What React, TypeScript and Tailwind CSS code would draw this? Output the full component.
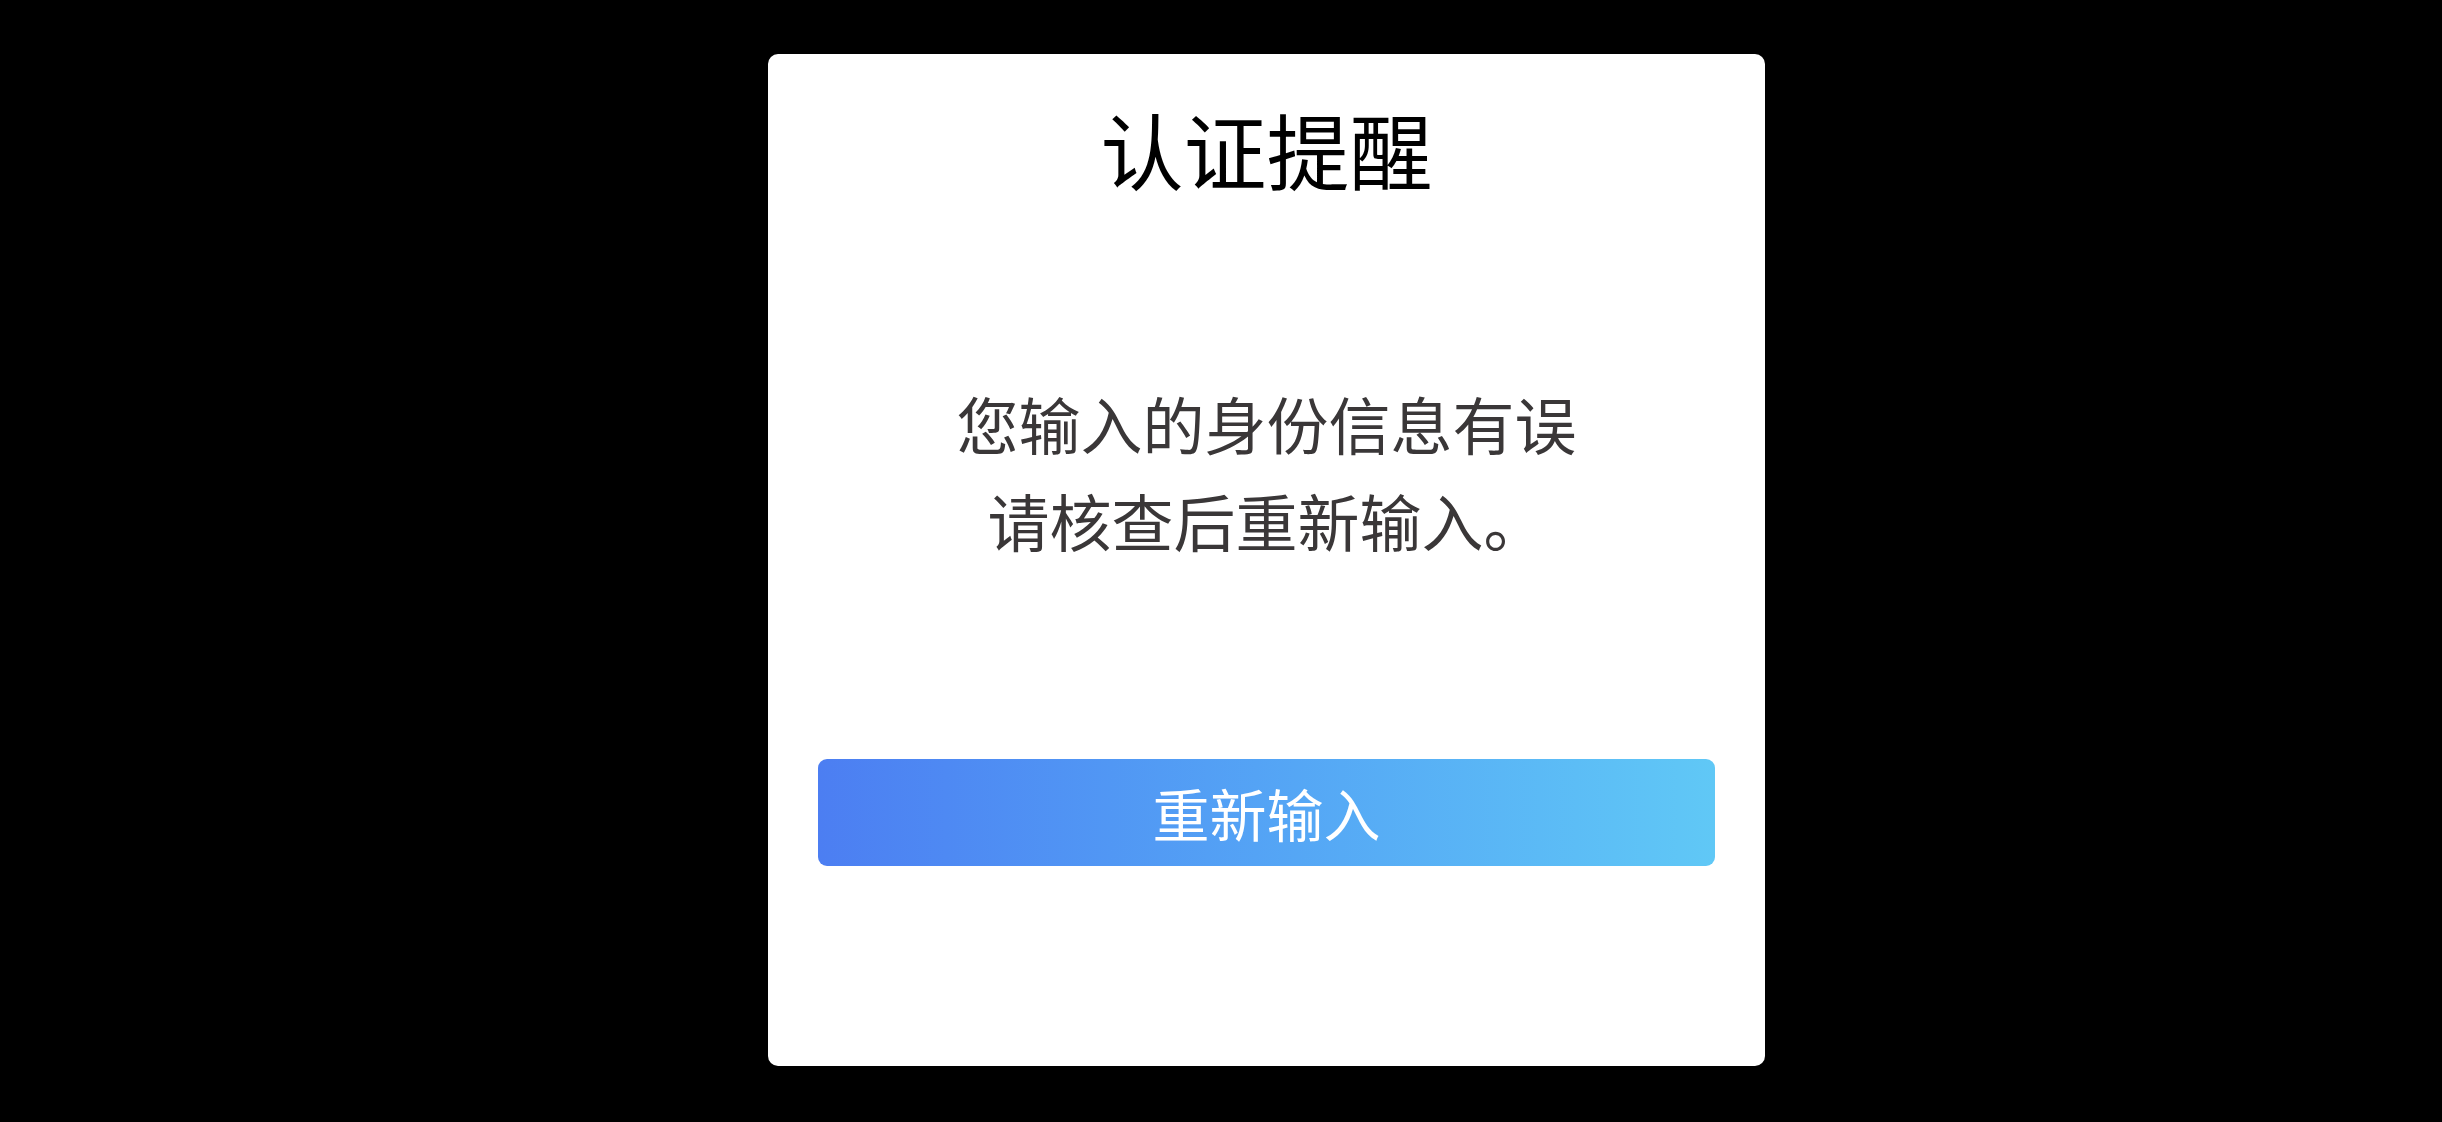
export default function App() {
  return (
    <div className="flex min-h-screen w-full items-start justify-start bg-black pt-[54px] pl-[768px] font-['Noto_Sans_CJK_SC','Noto_Sans',sans-serif]">
      {/* 认证提醒弹窗 */}
      <div className="flex w-[997px] flex-col items-center rounded-[10px] bg-white px-[50px] pt-[46px] pb-[200px]">
        <h1 className="text-[83px] leading-[96px] font-normal text-black">认证提醒</h1>
        <p className="mt-[179px] text-center text-[62px] leading-[97px] text-[#3a3738]">
          您输入的身份信息有误
          <br />
          请核查后重新输入。
        </p>
        <button className="mt-[190px] h-[107px] w-full rounded-[9px] bg-gradient-to-r from-[#4c7ef2] to-[#60c8f6] text-[57px] text-white">
          重新输入
        </button>
      </div>
    </div>
  )
}
